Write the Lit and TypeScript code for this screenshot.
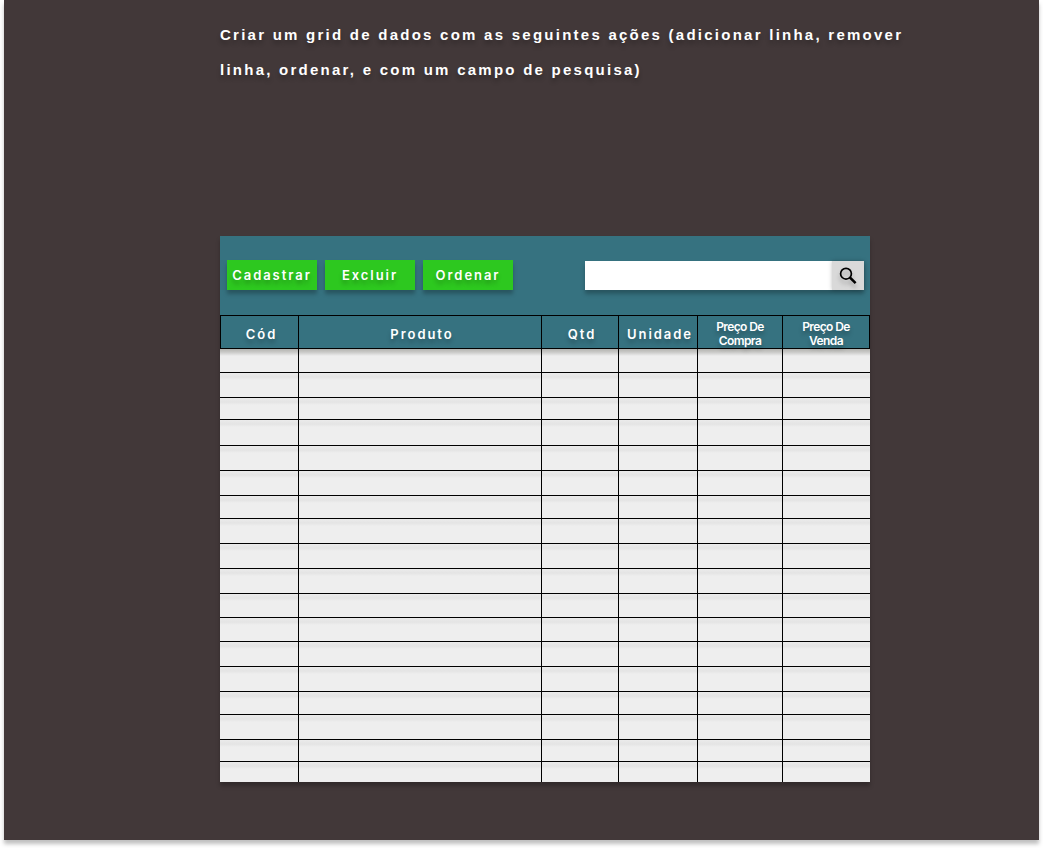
import { LitElement, html, css } from "lit";
import { customElement, property } from "lit/decorators.js";

interface Column {
  label: string;
  width: number;
  compact?: boolean;
}

const COLUMNS: Column[] = [
  { label: "Cód", width: 79 },
  { label: "Produto", width: 243 },
  { label: "Qtd", width: 77 },
  { label: "Unidade", width: 79 },
  { label: "Preço De Compra", width: 85, compact: true },
  { label: "Preço De Venda", width: 87, compact: true },
];

const ROW_HEIGHTS = [24, 25, 22, 26, 25, 25, 23, 25, 25, 25, 24, 24, 25, 25, 23, 25, 22, 20];

@customElement("product-toolbar")
export class ProductToolbar extends LitElement {
  static styles = css`
    :host {
      display: flex;
      flex-wrap: wrap;
      justify-content: space-between;
      align-items: flex-end;
      gap: 8px;
      padding: 24px 6px 25px 7px;
      background: #367280;
    }
    .actions {
      display: flex;
      gap: 8px;
    }
    button {
      border: 0;
      padding: 0;
      cursor: pointer;
    }
    .action {
      width: 90px;
      height: 30px;
      background: #2dc81f;
      color: #fff;
      font: 600 13px/30px Inter, sans-serif;
      letter-spacing: 0.15em;
      text-shadow: 0 4px 4px rgba(0, 0, 0, 0.25);
      box-shadow: 0 4px 4px rgba(0, 0, 0, 0.25);
    }
    .search {
      display: flex;
      flex: 0 1 279px;
      height: 29px;
      box-shadow: 0 4px 4px rgba(0, 0, 0, 0.25);
    }
    input {
      flex: 1;
      min-width: 0;
      box-sizing: border-box;
      border: 0;
      padding: 0 8px;
      background: #fff;
      font: 13px Inter, sans-serif;
      outline: none;
      border-radius: 0;
    }
    .find {
      display: flex;
      align-items: center;
      justify-content: center;
      width: 32px;
      background: #d9d9d9;
      box-shadow: 0 0 4px rgba(0, 0, 0, 0.25);
    }
    svg {
      display: block;
      filter: drop-shadow(0 4px 2px rgba(0, 0, 0, 0.25));
    }
  `;

  render() {
    return html`
      <div class="actions">
        <button class="action" type="button">Cadastrar</button>
        <button class="action" type="button">Excluir</button>
        <button class="action" type="button">Ordenar</button>
      </div>
      <form class="search" role="search" @submit=${(e: Event) => e.preventDefault()}>
        <input type="text" aria-label="Pesquisar" />
        <button class="find" type="submit" aria-label="Pesquisar">
          <svg width="18" height="18" viewBox="0 0 18 18" fill="none" stroke="#000">
            <circle cx="7" cy="6.7" r="5.4" stroke-width="1.7" />
            <path d="M10.8 10.4 L16.6 16.2" stroke-width="2.6" />
          </svg>
        </button>
      </form>
    `;
  }
}

@customElement("product-table")
export class ProductTable extends LitElement {
  @property({ attribute: false }) columns: Column[] = COLUMNS;
  @property({ attribute: false }) rows: number[] = ROW_HEIGHTS;

  static styles = css`
    :host {
      display: block;
    }
    table {
      width: 100%;
      table-layout: fixed;
      border-collapse: separate;
      border-spacing: 0;
      background: #eee;
    }
    th,
    td {
      box-sizing: border-box;
      padding: 0;
      border: 0 solid #000;
      border-width: 0 1px 1px 0;
    }
    th {
      height: 34px;
      border-top-width: 1px;
      padding-left: 4px;
      background: #367280;
      color: #fff;
      font: 600 13px/28px Inter, sans-serif;
      letter-spacing: 0.15em;
      text-align: center;
      vertical-align: bottom;
      text-shadow: 0 4px 4px rgba(0, 0, 0, 0.25);
    }
    th:first-child {
      border-left-width: 1px;
    }
    .compact {
      padding: 0 16px;
      font-size: 12px;
      line-height: 14px;
      letter-spacing: -0.05em;
    }
    td {
      background: linear-gradient(#ebebeb, #e4e4e4 4px, #eee 7px);
    }
    tr:first-child td {
      background: linear-gradient(#b4b4b0, #c8c8c6 3px, #eee 7px);
    }
    td:last-child {
      border-right-width: 0;
    }
    tr:last-child td {
      border-bottom-width: 0;
    }
  `;

  render() {
    return html`
      <table>
        <colgroup>
          ${this.columns.map((c) => html`<col style="width:${c.width}px" />`)}
        </colgroup>
        <thead>
          <tr>
            ${this.columns.map(
              (c) => html`<th scope="col" class=${c.compact ? "compact" : ""}>${c.label}</th>`
            )}
          </tr>
        </thead>
        <tbody>
          ${this.rows.map(
            (h) => html`<tr style="height:${h}px">${this.columns.map(() => html`<td></td>`)}</tr>`
          )}
        </tbody>
      </table>
    `;
  }
}

@customElement("app-root")
export class AppRoot extends LitElement {
  static styles = css`
    :host {
      display: block;
      padding: 0 4px 8px;
      background: #fff;
    }
    main {
      display: flex;
      flex-direction: column;
      gap: 149px;
      padding: 17px 32px 58px 216px;
      background: #423839;
      box-shadow: 0 4px 4px rgba(0, 0, 0, 0.25);
    }
    h1 {
      max-width: 700px;
      margin: 0;
      color: #fff;
      font: bold 15px/35px "Liberation Sans", Arial, sans-serif;
      letter-spacing: 0.15em;
      text-shadow: 0 4px 4px rgba(0, 0, 0, 0.25);
    }
    .grid {
      max-width: 650px;
      box-shadow: 0 4px 4px rgba(0, 0, 0, 0.25);
    }
  `;

  render() {
    return html`
      <main>
        <h1>
          Criar um grid de dados com as seguintes ações (adicionar linha, remover linha, ordenar, e
          com um campo de pesquisa)
        </h1>
        <section class="grid">
          <product-toolbar></product-toolbar>
          <product-table></product-table>
        </section>
      </main>
    `;
  }
}
